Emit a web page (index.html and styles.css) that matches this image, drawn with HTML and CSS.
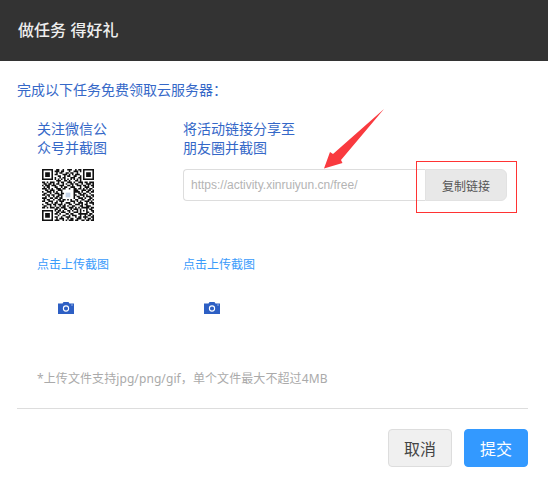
FILE: index.html
```html
<!DOCTYPE html>
<html lang="zh-CN">
<head>
<meta charset="utf-8">
<title>做任务 得好礼</title>
<link rel="stylesheet" href="styles.css">
</head>
<body>
<div class="dialog">
  <header class="head">做任务 得好礼</header>
  <main class="body">
    <p class="intro">完成以下任务免费领取云服务器：</p>
    <div class="tasks">
      <section class="task task-qr">
        <p class="task-title">关注微信公<br>众号并截图</p>
        <svg class="qr" viewBox="0 0 33 33" aria-hidden="true">
          <path class="qr-mods" d="M0 .5h7M9 .5h2M13 .5h1M16 .5h3M21 .5h1M23 .5h2M26 .5h7M0 1.500h1M6 1.500h1M8 1.500h3M12 1.500h2M17 1.500h1M20 1.500h3M24 1.500h1M26 1.500h1M32 1.500h1M0 2.500h1M2 2.500h3M6 2.500h1M9 2.500h1M11 2.500h2M15 2.500h2M18 2.500h2M22 2.500h1M26 2.500h1M28 2.500h3M32 2.500h1M0 3.500h1M2 3.500h3M6 3.500h1M8 3.500h2M13 3.500h3M17 3.500h1M19 3.500h1M21 3.500h3M26 3.500h1M28 3.500h3M32 3.500h1M0 4.500h1M2 4.500h3M6 4.500h1M10 4.500h2M14 4.500h1M16 4.500h2M20 4.500h2M24 4.500h1M26 4.500h1M28 4.500h3M32 4.500h1M0 5.500h1M6 5.500h1M8 5.500h1M11 5.500h1M13 5.500h2M18 5.500h3M23 5.500h2M26 5.500h1M32 5.500h1M0 6.500h7M8 6.500h1M10 6.500h1M12 6.500h1M14 6.500h1M16 6.500h1M18 6.500h1M20 6.500h1M22 6.500h1M24 6.500h1M26 6.500h7M9 7.500h3M14 7.500h2M17 7.500h1M21 7.500h2M24 7.500h1M0 8.500h2M3 8.500h1M5 8.500h3M10 8.500h1M12 8.500h2M16 8.500h3M20 8.500h1M23 8.500h3M27 8.500h2M30 8.500h3M1 9.500h2M4 9.500h2M7 9.500h1M9 9.500h2M13 9.500h1M15 9.500h1M18 9.500h2M21 9.500h2M25 9.500h1M28 9.500h3M32 9.500h1M0 10.500h1M2 10.500h3M6 10.500h3M11 10.500h3M16 10.500h2M19 10.500h1M22 10.500h3M26 10.500h2M29 10.500h1M31 10.500h2M1 11.500h1M3 11.500h2M8 11.500h2M12 11.500h1M14 11.500h2M18 11.500h3M24 11.500h1M27 11.500h3M32 11.500h1M0 12.500h3M4 12.500h1M6 12.500h1M9 12.500h3M13 12.500h2M17 12.500h1M20 12.500h2M23 12.500h2M26 12.500h1M28 12.500h1M30 12.500h2M2 13.500h2M5 13.500h3M10 13.500h3M20 13.500h3M25 13.500h3M29 13.500h2M32 13.500h1M0 14.500h1M3 14.500h3M7 14.500h1M9 14.500h1M12 14.500h1M20 14.500h4M25 14.500h1M28 14.500h2M31 14.500h2M1 15.500h2M5 15.500h1M8 15.500h3M12 15.500h2M20 15.500h1M23 15.500h2M26 15.500h2M30 15.500h1M0 16.500h2M3 16.500h2M6 16.500h2M10 16.500h3M20 16.500h2M24 16.500h3M28 16.500h1M31 16.500h2M2 17.500h1M4 17.500h1M7 17.500h1M9 17.500h2M12 17.500h1M20 17.500h1M22 17.500h2M26 17.500h1M28 17.500h3M32 17.500h1M0 18.500h3M5 18.500h2M8 18.500h2M11 18.500h2M20 18.500h1M23 18.500h3M27 18.500h1M30 18.500h2M1 19.500h1M3 19.500h2M7 19.500h1M10 19.500h2M13 19.500h2M16 19.500h1M18 19.500h1M21 19.500h2M25 19.500h2M29 19.500h2M32 19.500h1M0 20.500h2M4 20.500h3M9 20.500h1M11 20.500h3M18 20.500h3M22 20.500h1M24 20.500h1M27 20.500h3M31 20.500h1M2 21.500h2M6 21.500h1M8 21.500h2M12 21.500h1M15 21.500h3M20 21.500h1M23 21.500h3M28 21.500h1M30 21.500h3M0 22.500h1M3 22.500h3M7 22.500h2M10 22.500h3M14 22.500h1M17 22.500h2M21 22.500h3M25 22.500h1M27 22.500h2M32 22.500h1M1 23.500h2M5 23.500h1M8 23.500h1M11 23.500h1M13 23.500h2M16 23.500h1M19 23.500h2M24 23.500h2M28 23.500h3M0 24.500h2M3 24.500h1M5 24.500h3M9 24.500h2M12 24.500h3M17 24.500h3M21 24.500h1M23 24.500h1M25 24.500h5M31 24.500h2M8 25.500h2M11 25.500h1M14 25.500h2M18 25.500h1M20 25.500h3M24 25.500h1M28 25.500h1M30 25.500h2M0 26.500h7M8 26.500h1M10 26.500h2M13 26.500h1M16 26.500h2M19 26.500h1M22 26.500h1M24 26.500h1M26 26.500h1M28 26.500h1M31 26.500h2M0 27.500h1M6 27.500h1M9 27.500h2M12 27.500h3M17 27.500h1M20 27.500h3M24 27.500h1M28 27.500h2M32 27.500h1M0 28.500h1M2 28.500h3M6 28.500h1M8 28.500h2M11 28.500h1M15 28.500h2M18 28.500h2M23 28.500h6M30 28.500h2M0 29.500h1M2 29.500h3M6 29.500h1M10 29.500h1M13 29.500h2M17 29.500h1M19 29.500h3M24 29.500h1M27 29.500h1M29 29.500h2M32 29.500h1M0 30.500h1M2 30.500h3M6 30.500h1M8 30.500h2M12 30.500h1M15 30.500h3M21 30.500h1M23 30.500h2M26 30.500h3M31 30.500h2M0 31.500h1M6 31.500h1M9 31.500h1M11 31.500h3M16 31.500h1M18 31.500h2M22 31.500h3M27 31.500h1M29 31.500h2M32 31.500h1M0 32.500h7M8 32.500h3M13 32.500h1M15 32.500h1M17 32.500h3M21 32.500h2M25 32.500h2M28 32.500h2M31 32.500h2"/>
          <path class="qr-logo" d="M15 15h3v3h-3z"/>
        </svg>
        <a class="upload-link">点击上传截图</a>
        <svg class="cam" viewBox="0 0 16 12" aria-hidden="true">
          <path class="cam-body" d="M0 1.500h4.500L5.500 0h5l1 1.500H16V12H0z"/>
          <circle class="cam-ring" cx="8" cy="6.500" r="2.600"/>
          <rect class="cam-dot" x="13.500" y="2.500" width="1" height="1"/>
        </svg>
      </section>
      <section class="task task-share">
        <p class="task-title">将活动链接分享至<br>朋友圈并截图</p>
        <div class="copy-row">
          <input class="url" type="text" placeholder="https://activity.xinruiyun.cn/free/">
          <button class="copy" type="button">复制链接</button>
        </div>
        <a class="upload-link">点击上传截图</a>
        <svg class="cam" viewBox="0 0 16 12" aria-hidden="true">
          <path class="cam-body" d="M0 1.500h4.500L5.500 0h5l1 1.500H16V12H0z"/>
          <circle class="cam-ring" cx="8" cy="6.500" r="2.600"/>
          <rect class="cam-dot" x="13.500" y="2.500" width="1" height="1"/>
        </svg>
      </section>
    </div>
    <p class="note">*上传文件支持jpg/png/gif，单个文件最大不超过4MB</p>
    <footer class="foot">
      <button class="btn btn-cancel" type="button">取消</button>
      <button class="btn btn-submit" type="button">提交</button>
    </footer>
  </main>
  <svg class="arrow" viewBox="0 0 70 80" aria-hidden="true">
    <path class="arrow-fill" d="M62 0 L19 51 L20.500 54 L2 59.500 L8 43 L11 45 Z"/>
  </svg>
  <div class="highlight"></div>
</div>
</body>
</html>
```
FILE: styles.css
```css
* { box-sizing: border-box; }
html, body { margin: 0; height: 100%; }
body {
  background: #fff;
  font-family: "Liberation Sans", "Noto Sans CJK SC", sans-serif;
  overflow: hidden;
}
.dialog { position: relative; width: 548px; height: 485px; }
.head {
  height: 61px;
  background: #333;
  color: #eee;
  font-size: 16px;
  font-weight: 500;
  line-height: 61px;
  padding-left: 18px;
}
.body { padding: 0 20px 0 17px; }
.intro {
  margin: 0;
  padding-top: 20px;
  height: 58px;
  font-size: 14px;
  line-height: 18px;
  color: #3568c8;
  font-weight: 400;
}
.tasks { display: flex; padding-left: 20px; }
.task-qr { width: 146px; }
.task-share { flex: 1; }
.task-title {
  margin: 0;
  padding-top: 1px;
  font-size: 14px;
  line-height: 19px;
  height: 50px;
  color: #3568c8;
  font-weight: 400;
}
.qr { display: block; width: 52px; height: 52px; margin-left: 5px; }
.qr-mods { fill: none; stroke: #111; stroke-width: 1; }
.qr-logo { fill: #c5d3e6; }
.copy-row { display: flex; height: 32px; margin-bottom: 20px; }
.url {
  width: 242px;
  height: 32px;
  border: 1px solid #ddd;
  border-right: 0;
  border-radius: 4px 0 0 4px;
  padding: 0 8px 0 7px;
  font: 12px "Liberation Sans", sans-serif;
  background: #fff;
  outline: 0;
}
.url::placeholder { color: #b4b4b4; opacity: 1; }
.copy {
  width: 82px;
  height: 32px;
  border: 1px solid #e2e2e2;
  border-radius: 0 6px 6px 0;
  background: #e8e8e8;
  color: #555;
  font: 400 12px "Noto Sans CJK SC", sans-serif;
  padding: 0;
}
.upload-link {
  display: block;
  font-size: 12px;
  line-height: 16px;
  color: #3a9bfb;
  font-weight: 400;
}
.task-qr .upload-link { margin-top: 36px; }
.task-share .upload-link { margin-top: 56px; }
.cam { display: block; width: 16px; height: 12px; margin: 29px 0 0 21px; }
.cam-body { fill: #2d5fc4; }
.cam-ring { fill: none; stroke: #fff; stroke-width: 1.100; }
.cam-dot { fill: #fff; }
.note {
  margin: 57px 0 0 20px;
  font-family: "Noto Sans", "Noto Sans CJK SC", sans-serif;
  font-size: 12px;
  line-height: 16px;
  letter-spacing: .09px;
  color: #aaa;
  font-weight: 400;
}
.foot {
  margin-top: 21px;
  border-top: 1px solid #ddd;
  padding-top: 20px;
  display: flex;
  justify-content: flex-end;
  gap: 12px;
  width: 511px;
}
.btn {
  width: 64px;
  height: 38px;
  border-radius: 4px;
  font: 400 16px/36px "Noto Sans CJK SC", sans-serif;
  padding: 0;
}
.btn-cancel { background: #f0f0f0; border: 1px solid #ddd; color: #444; }
.btn-submit { background: #39f; border: 1px solid #39f; color: #fff; }
.arrow { position: absolute; left: 322px; top: 109px; width: 70px; height: 80px; }
.arrow-fill { fill: #f93a3f; }
.highlight {
  position: absolute;
  left: 416px;
  top: 161px;
  width: 101px;
  height: 52px;
  border: 1px solid #f33;
}
```
